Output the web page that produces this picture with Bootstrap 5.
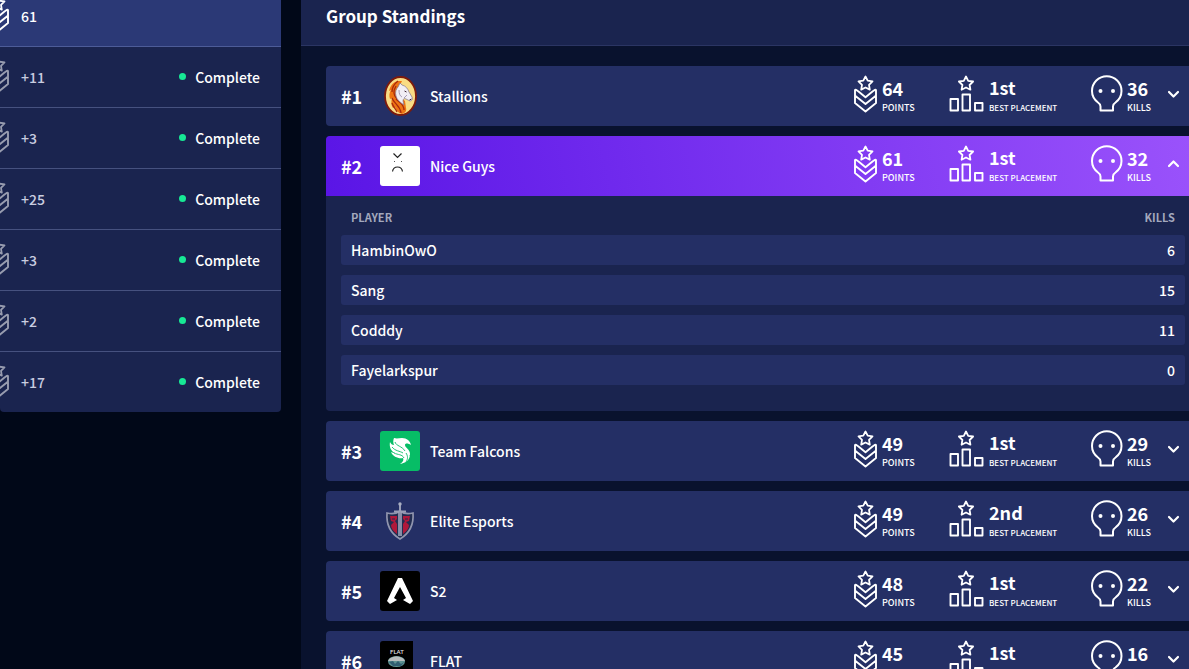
<!DOCTYPE html>
<html lang="en">
<head>
<meta charset="utf-8">
<meta name="viewport" content="width=device-width, initial-scale=1">
<title>Group Standings</title>
<link href="https://cdn.jsdelivr.net/npm/bootstrap@5.3.0/dist/css/bootstrap.min.css" rel="stylesheet">
<style>
body{background:#010818;color:#fff;font:500 14px/20px "Noto Sans CJK JP","Source Sans Pro",sans-serif}
.page{height:100vh;overflow:hidden}
.matches{width:281px;background:#1a244f;border-radius:0 0 4px 4px;overflow:hidden}
.match{height:61px;border-bottom:1px solid #46517f;padding-right:21px}
.match:last-child{border-bottom:0;height:60px}
.match.current{height:47px;background:#2b3976;border-color:#4d5c98;padding-bottom:14px}
.match .points-icon{margin-left:-14px;margin-right:11px}
.match .gain{color:#c9cde0}
.match:not(.current) .points-icon{opacity:.55}
.state{gap:9px}
.dot{width:7px;height:7px;background:#17e895;margin-bottom:2px}
.standings{background:#09122e;margin-left:20px;min-width:0}
.standings header{height:46px;background:#1a244f;border-bottom:1px solid #2b3563;padding:0 25px 14px}
.standings h1{font-size:17px;line-height:24px}
.teams{padding:20px 0 0 25px;gap:10px}
.team{background:#1a244f;border-radius:4px 0 0 4px;overflow:hidden}
.team-row{height:60px;background:#242f65;border:0;color:#fff;padding:0 9px 0 15px;text-align:left;font-weight:500}
.team-row.open{background:linear-gradient(78deg,#5a15e6,#9a52fb)}
.rank{width:39px;font-size:18px;font-weight:700}
.logo{width:40px;height:40px;margin-right:10px;border-radius:3px}
.stat{gap:4px}
.s-points{width:95px}.s-place{width:142px}.s-kills{width:76px}
.stat b{display:block;font-size:18px;line-height:20px;padding-top:2px;box-sizing:content-box}
.stat small{display:block;font-size:9px;line-height:18px;padding-top:1px;white-space:nowrap}
.s-place{gap:5px}
.s-place b{padding-top:3px}
.s-place small{font-size:8px;line-height:20px}
.players{padding:0 4px 16px 15px}
.players table{width:100%;border-collapse:separate;border-spacing:0 10px}
.players th{font-size:11px;font-weight:700;line-height:11px;padding:6px 10px 2px;color:#a3a8bd}
.players td{background:#242f65;padding:5px 10px}
.players td:first-child{border-radius:3px 0 0 3px}
.players td:last-child{border-radius:0 3px 3px 0}
.line-icon{fill:none;stroke:#fff;stroke-width:2;stroke-linejoin:round;stroke-linecap:round;flex:none;margin-bottom:4px}
</style>
<script src="https://cdn.jsdelivr.net/npm/bootstrap@5.3.0/dist/js/bootstrap.bundle.min.js"></script>
</head>
<body>
<svg class="d-none" aria-hidden="true">
  <symbol id="points" viewBox="0 0 24 38"><path d="M11.500 1.500l2.200 4.200 4.800.7-3.500 3.500.8 4.700-4.300-2.100-4.300 2.100.8-4.700-3.500-3.500 4.800-.7z" stroke-width="1.800"/><path d="M4.500 16.500L2 14.800c-.6-.4-1 0-1 .6V28l10.500 8.500L22 28V15.400c0-.6-.4-1-1-.6l-2.500 1.700-7 5.700zM1.500 21l10 8 10-8" stroke-width="1.900"/></symbol>
  <symbol id="place" viewBox="0 0 35 38"><path d="M17 1.500l2.200 4.300 4.900.7-3.500 3.500.8 4.700-4.400-2.200-4.400 2.200.8-4.700-3.500-3.500 4.900-.7z" stroke-width="1.800"/><path d="M1.500 24h7.500v11.500H1.500zM13.500 19.500h7.500v16h-7.500zM26 28h7.500v7.500H26z" stroke-width="1.900"/></symbol>
  <symbol id="skull" viewBox="0 0 32 38"><path d="M9.500 35.500v-4q0-2.500-2.500-4C3 24.500 1 21 1 16a14.700 14.700 0 0 1 29.500 0c0 5-2 8.500-6 11.500q-2.500 1.500-2.500 4v4z"/><circle cx="9.500" cy="16" r="1" fill="#fff"/><circle cx="22" cy="16" r="1" fill="#fff"/></symbol>
  <symbol id="down" viewBox="0 0 13 12"><path d="M2 4l4.500 4.500L11 4" stroke-width="2.200"/></symbol>
  <symbol id="up" viewBox="0 0 13 12"><path d="M2 8l4.500-4.500L11 8" stroke-width="2.200"/></symbol>
</svg>
<div class="page d-flex">
  <aside class="matches flex-shrink-0 align-self-start" id="matches"></aside>
  <main class="standings flex-grow-1">
    <header class="d-flex align-items-center"><h1 class="fw-bold m-0">Group Standings</h1></header>
    <div class="teams d-flex flex-column" id="teams"></div>
  </main>
</div>
<script>
const icon=(id,w,h,cls='')=>`<svg class="line-icon ${cls}" width="${w}" height="${h}" aria-hidden="true"><use href="#${id}"/></svg>`;
document.getElementById('matches').innerHTML=['61','+11','+3','+25','+3','+2','+17'].map((g,i)=>`
<div class="match d-flex align-items-center ${i?'':'current'}">${icon('points',24,38,'points-icon')}<span class="${i?'gain':''}">${g}</span>${i?'<span class="state ms-auto d-flex align-items-center"><i class="dot rounded-circle"></i>Complete</span>':''}</div>`).join('');

const logos={
stallions:`<ellipse cx="20.500" cy="20" rx="15.500" ry="19" fill="#f9dc84" stroke="#7d1b0c" stroke-width="1.800"/><path d="M18 5c-5 1-8 5-9 10l2-1c-2 3-2 6-1 9l2-1c-1 4-1 7 1 10l2-1c1 3 3 6 7 7 3-1 5-3 4-6l-1-7-7-6 1-8 3-6z" fill="#ee7413"/><path d="M18 5c-4 3-6 6-6 11M16 10c-3 5-3 9 1 13M12 22c2 6 8 7 9 15M16 23c4 4 8 5 8 11M12 27c1 4 4 6 5 9" fill="none" stroke="#a92a0c" stroke-width="1.300"/><path d="M18 11l2-4 2 2c4 1 6 4 7 7l3 5c1 2 0 4-2 4l-4-2c-2-1-3 0-3 2l1 4c-4-3-7-5-8-9-1-4 0-7 2-9z" fill="#f1eef4" stroke="#81748c" stroke-width=".7"/><path d="M19 14c0 4 1 6 3 7M24 22l3-3" fill="none" stroke="#a69bb4"/><path d="M24.500 15l2 1M29.500 24l2-1" stroke="#3c2433"/>`,
nice:`<rect width="40" height="40" fill="#fff"/><path d="M13.500 7.500l4 4 4-4M12.500 25.500c1-6 9-6 10 0" fill="none" stroke="#222" stroke-width="1.200"/><path d="M14 15.500h1M21 15.500h1" stroke="#555"/>`,
falcons:`<rect width="40" height="40" fill="#07bd66"/><path d="M14 7c3 1 5 0 8 0 5 0 8 3 9 7-3-2-6-2-6 0 0 3 5 4 5 9 0 6-4 9-10 10 3-2 4-4 3-6-4 1-10-1-12-6 2 1 3 1 4 1-4-2-6-6-5-11 1 2 2 3 4 3-1-2-1-5 0-7z" fill="#fff"/><path d="M12 16c3 4 8 4 11 6M15 11c1 4 7 4 10 9M14 22c4 2 8 1 10 5M26 31c2-3 2-6 0-9M30 19c1 2 1 4 0 6" stroke="#07bd66" stroke-width=".9" fill="none"/>`,
elite:`<path d="M7 12q8 2 13-2 5 4 13 2c1 12-3 20-13 26C10 32 6 24 7 12z" fill="#222d51" stroke="#9095ae" stroke-width="1.700"/><path d="M10 15h7v3l-2 2 2 3v10c-4-3-6-6-6-9l3-3-3-1zM30 15h-7v3l2 2-2 3v10c4-3 6-6 6-9l-3-3 3-1z" fill="#b0183a"/><path d="M12 18h3M25 18h3" stroke="#222d51"/><path d="M20 10v25" stroke="#a9adc3" stroke-width="3.500"/><path d="M20 10v25" stroke="#6a718d" stroke-width="1"/><path d="M14 10.500h12M20 2v8" stroke="#999eb5" stroke-width="2"/><circle cx="20" cy="3" r="1.700" fill="#aaaec1"/>`,
s2:`<rect width="40" height="40" fill="#000"/><path d="M18 7h4l11 23-3 3-7-4 3-2-6-11-6 11 3 2-7 4-3-3z" fill="#fff"/>`,
flat:`<path d="M0 0h33v40H0z" fill="#000"/><text x="10" y="13" font-size="6" fill="#eee" font-family="Lato,sans-serif">FLAT</text><ellipse cx="16.500" cy="20.500" rx="8.500" ry="5.500" fill="#5e9291"/><path d="M8 20c2-6 15-6 17 0z" fill="#b8bcbc"/><path d="M9 21l4-1 2 3 3-3 3 3 3-2-3 4h-8z" fill="#315d70"/>`};
const teams=[['Stallions','stallions',64,'1st',36],['Nice Guys','nice',61,'1st',32],['Team Falcons','falcons',49,'1st',29],['Elite Esports','elite',49,'2nd',26],['S2','s2',48,'1st',22],['FLAT','flat',45,'1st',16]];
const players=[['HambinOwO',6],['Sang',15],['Codddy',11],['Fayelarkspur',0]];
const stat=(cls,ic,w,v,l)=>`<span class="stat ${cls} d-flex align-items-center flex-shrink-0">${icon(ic,w,38)}<span><b>${v}</b><small>${l}</small></span></span>`;
document.getElementById('teams').innerHTML=teams.map((t,i)=>`
<section class="team"><button type="button" class="team-row d-flex align-items-center w-100 ${i==1?'open':''}" aria-expanded="${i==1}">
<span class="rank">#${i+1}</span><svg class="logo" viewBox="0 0 40 40" aria-hidden="true">${logos[t[1]]}</svg><span class="me-auto">${t[0]}</span>
${stat('s-points','points',24,t[2],'POINTS')}${stat('s-place','place',35,t[3],'BEST PLACEMENT')}${stat('s-kills','skull',32,t[4],'KILLS')}${icon(i==1?'up':'down',13,12)}</button>
${i==1?`<div class="players"><table><thead><tr><th>PLAYER</th><th class="text-end">KILLS</th></tr></thead><tbody>${players.map(p=>`<tr><td>${p[0]}</td><td class="text-end">${p[1]}</td></tr>`).join('')}</tbody></table></div>`:''}</section>`).join('');
</script>
</body>
</html>
